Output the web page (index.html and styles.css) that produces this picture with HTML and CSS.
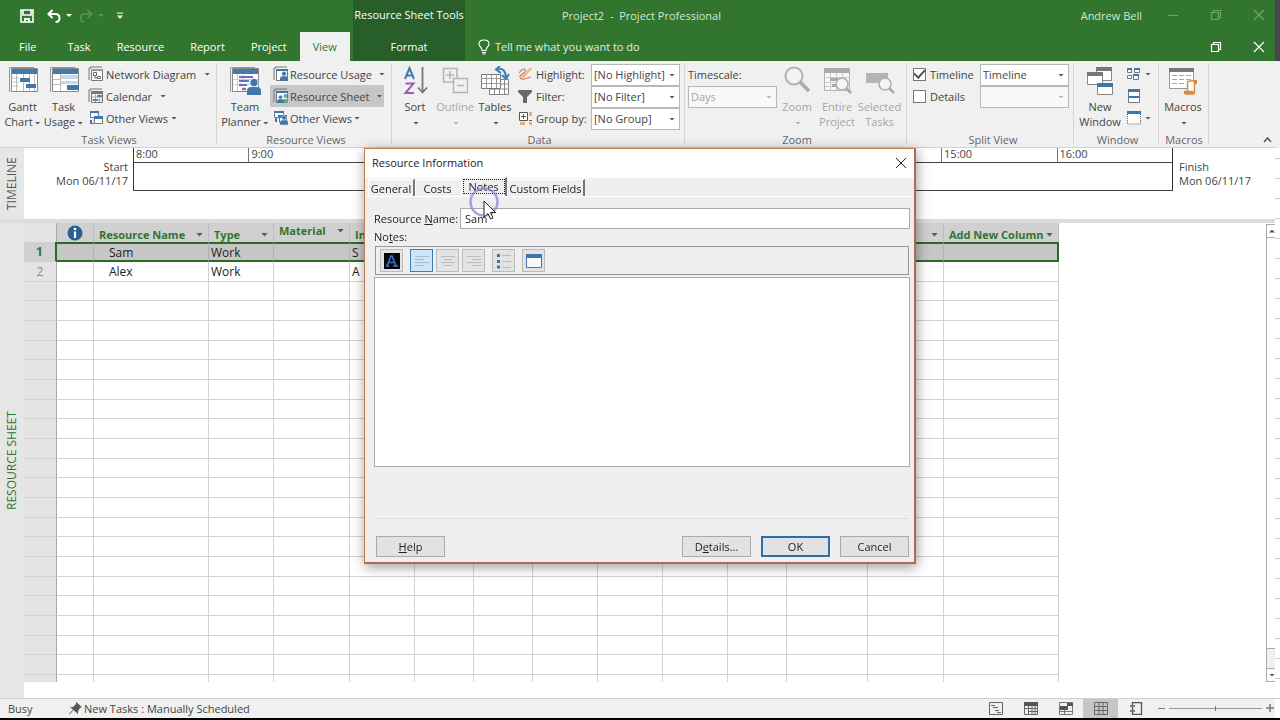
FILE: index.html
```html
<!DOCTYPE html>
<html lang="en">
<head>
<meta charset="utf-8">
<title>Project2 - Project Professional</title>
<link rel="stylesheet" href="styles.css">
</head>
<body>
<svg class="defs" width="0" height="0" aria-hidden="true">
  <symbol id="win" viewBox="0 0 16 16"><path d="M3 2H1v12M2 1h12" fill="none" stroke="#777"/><path d="M3.500 3.500h11v11h-11z" fill="#fff" stroke="#777"/></symbol>
  <symbol id="person" viewBox="0 0 10 12"><circle cx="5" cy="3.200" r="2.900" fill="#3f76ab" stroke="#f0f0f0" stroke-width=".6"/><path d="M0 12V9q0-2.600 3-2.600h4q3 0 3 2.600v3z" fill="#3f76ab"/></symbol>
  <symbol id="restore" viewBox="0 0 12 12"><path d="M1.500 3.500h7v7h-7zM3.500 3V1.500h7v7H9" fill="none" stroke="currentColor" stroke-width="1.200"/></symbol>
  <symbol id="cross" viewBox="0 0 12 12"><path d="M1 1l10 10M11 1L1 11" fill="none" stroke="currentColor" stroke-width="1.200"/></symbol>
</svg>
<div class="app">
<div class="main">
  <header class="head">
    <div class="head-left">
      <div class="qat">
        <button class="plain" aria-label="Save"><svg width="14" height="14" viewBox="0 0 14 14"><path d="M1 1h12v12H1zM3 1v5h8V1" fill="none" stroke="#fff" stroke-width="1.600"/><path d="M4 9h6v4H8v-2H6v2H4z" fill="#fff"/></svg></button>
        <button class="plain undo" aria-label="Undo"><svg width="14" height="14" viewBox="0 0 14 14"><path d="M5.500 1L1.500 5l4 4M2 5h6q4.500 0 4.500 4t-4 4" fill="none" stroke="#fff" stroke-width="2"/></svg><i class="arr white"></i></button>
        <button class="plain redo" aria-label="Redo"><svg width="14" height="14" viewBox="0 0 14 14"><path d="M8.500 1l4 4-4 4M12 5H6Q1.500 5 1.500 9t4 4" fill="none" stroke="#5c945b" stroke-width="1.600"/></svg><i class="arr faint"></i></button>
        <button class="plain" aria-label="Customize toolbar"><svg width="6" height="8" viewBox="0 0 6 8"><path d="M0 1h6" stroke="#fff"/><path d="M0 3.500h6L3 7z" fill="#fff"/></svg></button>
      </div>
      <nav class="tabs">
        <button class="tab file">File</button><button class="tab">Task</button><button class="tab">Resource</button><button class="tab">Report</button><button class="tab">Project</button><button class="tab on">View</button>
      </nav>
    </div>
    <div class="context"><div class="context-title">Resource Sheet Tools</div><button class="tab">Format</button></div>
    <div class="head-right">
      <div class="title-row"><span class="doc">Project2 &nbsp;-&nbsp; Project Professional</span><span class="user">Andrew Bell</span>
        <span class="wbtns dim"><button class="plain" aria-label="Minimize"><svg width="12" height="12"><path d="M1 6.500h10" stroke="currentColor"/></svg></button><button class="plain" aria-label="Restore"><svg width="12" height="12"><use href="#restore"/></svg></button><button class="plain" aria-label="Close"><svg width="12" height="12"><use href="#cross"/></svg></button></span></div>
      <div class="tell-row"><svg width="12" height="16" viewBox="0 0 12 16"><path d="M4 11.500q0-2-1.500-3.500Q1 6.500 1 5q0-4 5-4t5 4q0 1.500-1.500 3T8 11.500zM4 13.500h4M4.500 15h3" fill="none" stroke="#fff" stroke-width="1.100"/></svg><span>Tell me what you want to do</span>
        <span class="wbtns"><button class="plain" aria-label="Restore document"><svg width="12" height="12"><use href="#restore"/></svg></button><button class="plain" aria-label="Close document"><svg width="12" height="12"><use href="#cross"/></svg></button></span></div>
    </div>
  </header>

  <section class="ribbon">
    <div class="group g-task">
      <div class="gbody">
        <button class="big"><svg width="30" height="28" viewBox="0 0 30 28"><path d="M1.500 26V1.500H26" fill="none" stroke="#999"/><path d="M3.500 2.500h26v23h-26z" fill="#fff" stroke="#888"/><path d="M4 3h25v5H4z" fill="#4379ad"/><path d="M3 12h8M3 16h8M3 20h8M8.500 8v17M15.500 8v17M21.500 8v17M26.500 8v17" stroke="#bbb"/><path d="M12 12h10v4H12zM18 18h10v4H18z" fill="#3f76ab"/></svg><span>Gantt<br>Chart<i class="arr"></i></span></button>
        <button class="big"><svg width="30" height="28" viewBox="0 0 30 28"><path d="M1.500 26V1.500H26" fill="none" stroke="#999"/><path d="M3.500 2.500h26v23h-26z" fill="#fff" stroke="#888"/><path d="M4 3h25v5H4z" fill="#4379ad"/><path d="M12 9h17v4H12zM12 15h17v3H12z" fill="#c3d8ea"/><path d="M4 13.500h8M4 18.500h8M11.500 8v17" stroke="#bbb"/><path d="M18 19h12v5H18z" fill="#3f76ab"/></svg><span>Task<br>Usage<i class="arr"></i></span></button>
        <div class="list">
          <button class="row"><svg width="16" height="16"><use href="#win"/><path d="M3 3h12v2H3z" fill="#999"/><path d="M5.500 6.500h3v3h-3zM9.500 10.500h3v2h-3zM7 9.500V12h2" fill="none" stroke="#666"/></svg>Network Diagram<i class="arr far"></i></button>
          <button class="row"><svg width="16" height="16"><use href="#win"/><path d="M3 3h12v3H3z" fill="#777"/><path d="M4 9h10M4 12h10M7.500 6v8M11.500 6v8" stroke="#aaa"/><path d="M9 7h5v2H9zM5 11h5v2H5z" fill="#4d8abf"/></svg>Calendar<i class="arr far"></i></button>
          <button class="row"><svg width="16" height="16" viewBox="0 0 16 16"><path d="M2.500 1.500h8v6h-8z" fill="#fff" stroke="#777"/><path d="M2 1h9v2H2z" fill="#3f76ab"/><path d="M6.500 7.500h8v6h-8z" fill="#fff" stroke="#777"/><path d="M6 6h9v3H6zM2 10h2v3h2v1H2z" fill="#3f76ab"/></svg>Other Views<i class="arr"></i></button>
        </div>
      </div><div class="glabel">Task Views</div>
    </div>
    <div class="group g-res">
      <div class="gbody">
        <button class="big wide"><svg width="32" height="30" viewBox="0 0 32 30"><path d="M1.500 26V1.500H26" fill="none" stroke="#999"/><path d="M3.500 2.500h26v23h-26z" fill="#fff" stroke="#888"/><path d="M4 3h25v5H4z" fill="#4379ad"/><path d="M8.500 8v17M4 13.500h25M4 18.500h25" stroke="#ccc"/><path d="M10 11h4M16 11h8M10 15h10M12 19h6" stroke="#5578c0" stroke-width="2"/><path d="M12 11h4M13 23h4M10 19h3" stroke="#9b5db5" stroke-width="2.500"/><svg x="18" y="12" width="14" height="17"><use href="#person"/></svg></svg><span>Team<br>Planner<i class="arr"></i></span></button>
        <div class="list">
          <button class="row"><svg width="16" height="16"><use href="#win"/><path d="M3 3h12v2H3z" fill="#3f76ab"/><svg x="7" y="5" width="8" height="10"><use href="#person"/></svg></svg>Resource Usage<i class="arr far"></i></button>
          <button class="row sel"><svg width="16" height="16"><use href="#win"/><path d="M3 3h12v2H3z" fill="#3f76ab"/><circle cx="12.500" cy="8" r="2" fill="#69a88a"/><path d="M10 11h5v4h-5z" fill="#69a88a"/><svg x="4" y="7" width="7" height="8"><use href="#person"/></svg></svg>Resource Sheet<i class="arr far"></i></button>
          <button class="row"><svg width="16" height="16" viewBox="0 0 16 16"><path d="M1.500 1.500h9v6h-9zM6.500 6.500h7v6h-7z" fill="#fff" stroke="#777"/><path d="M1 1h10v2H1zM5 5h9v2H5zM2 8h2v4H2z" fill="#3f76ab"/><svg x="7" y="5" width="8" height="10"><use href="#person"/></svg></svg>Other Views<i class="arr"></i></button>
        </div>
      </div><div class="glabel">Resource Views</div>
    </div>
    <div class="group g-data">
      <div class="gbody">
        <button class="big b40"><svg width="26" height="30" viewBox="0 0 26 30"><path d="M3 13L7.500 2 12 13M4.500 9.500h6" fill="none" stroke="#3f7cb5" stroke-width="2"/><path d="M3.500 17.500h8L3.500 27h8.500" fill="none" stroke="#9b5db5" stroke-width="2"/><path d="M20.500 1v25M16 21.500l4.500 5 4.500-5" fill="none" stroke="#777" stroke-width="1.800"/></svg><span>Sort<br><i class="arr"></i></span></button>
        <button class="big b40 off"><svg width="26" height="30" viewBox="0 0 26 30"><path d="M12.500 16H1.500V2.500H15V12.500M11.500 12.500h14v14h-14zM8 5v8M4 9h8M15 19.500h7" fill="none" stroke="#b4b4b4" stroke-width="1.500"/></svg><span>Outline<br><i class="arr"></i></span></button>
        <button class="big b40"><svg width="30" height="30" viewBox="0 0 30 30"><path d="M9.500 13.500h19v15h-19zM9 18h20M9 23h20M14.500 13v15M19.500 13v15M24.500 13v15" fill="#fff" stroke="#888"/><path d="M1.500 8.500h19v14h-19z" fill="#fff" stroke="#777"/><path d="M1 12.500h20M1 17.500h20M6.500 8v14M11.500 8v14M16.500 8v14" stroke="#999"/><path d="M17 3q8-2 9 8M20 0l-4 3.500 5 3.500M22 9l4 4 3-5" fill="none" stroke="#3f7cb5" stroke-width="2"/></svg><span>Tables<br><i class="arr"></i></span></button>
        <div class="fields">
          <label for="hl"><svg width="15" height="16" viewBox="0 0 15 16"><path d="M1 7q4-5 6-3.500T2 10q0 4 4 3t7-2" fill="none" stroke="#e07a70" stroke-width="1.200"/><path d="M4 12L13 2" stroke="#e9bd70" stroke-width="2.500"/></svg>Highlight:</label><span class="combo"><select id="hl"><option>[No Highlight]</option></select></span>
          <label for="fl"><svg width="15" height="16" viewBox="0 0 15 16"><path d="M0 2h14v2L9 9v6H5V9L0 4z" fill="#6a6a6a"/></svg>Filter:</label><span class="combo"><select id="fl"><option>[No Filter]</option></select></span>
          <label for="gb"><svg width="15" height="16" viewBox="0 0 15 16"><path d="M1.500 2.500h8v8h-8z" fill="#fff" stroke="#555"/><path d="M5.500 4v5M3 6.500h5M11 10.500h3" stroke="#555"/><path d="M11 2h3v4h-3zM2 12h5v3H2zM11 12h3v3h-3z" fill="#e0b36c"/></svg>Group by:</label><span class="combo"><select id="gb"><option>[No Group]</option></select></span>
        </div>
      </div><div class="glabel">Data</div>
    </div>
    <div class="group g-zoom">
      <div class="gbody">
        <div class="scale"><label for="ts">Timescale:</label><span class="combo off"><select id="ts" disabled><option>Days</option></select></span></div>
        <button class="big b40 off"><svg width="28" height="28" viewBox="0 0 28 28"><circle cx="11" cy="10" r="8.500" fill="#f6f2f6" stroke="#b4b0b4" stroke-width="2"/><path d="M17 16l9 9" stroke="#aaa" stroke-width="3.500"/></svg><span>Zoom<br><i class="arr"></i></span></button>
        <button class="big b40 off"><svg width="30" height="28" viewBox="0 0 30 28"><path d="M2.500 2.500h25v22h-25z" fill="#f6f6f6" stroke="#b4b4b4"/><path d="M2 2h26v5H2z" fill="#aaa"/><path d="M3 11.500h24M3 16.500h24M3 20.500h24M8.500 7v17M14.500 7v17M20.500 7v17" stroke="#ccc"/><path d="M8 12h8v3H8zM10 18h6v3h-6z" fill="#aaa"/><circle cx="20" cy="18" r="6" fill="#f4f4f4" stroke="#b0b0b0" stroke-width="1.600"/><path d="M24 22l5 5" stroke="#aaa" stroke-width="2.500"/></svg><span>Entire<br>Project</span></button>
        <button class="big b44 off"><svg width="30" height="28" viewBox="0 0 30 28"><path d="M1 7h22v10H1z" fill="#b4b4b4"/><circle cx="20" cy="18" r="6" fill="#f4f4f4" stroke="#b0b0b0" stroke-width="1.600"/><path d="M24 22l5 5" stroke="#aaa" stroke-width="2.500"/></svg><span>Selected<br>Tasks</span></button>
      </div><div class="glabel">Zoom</div>
    </div>
    <div class="group g-split">
      <div class="gbody"><div class="checks">
        <label><input type="checkbox" checked>Timeline</label><span class="combo"><select aria-label="Timeline view"><option>Timeline</option></select></span>
        <label><input type="checkbox">Details</label><span class="combo off"><select aria-label="Details view" disabled><option></option></select></span>
      </div></div><div class="glabel">Split View</div>
    </div>
    <div class="group g-win">
      <div class="gbody">
        <button class="big b46"><svg width="28" height="30" viewBox="0 0 28 30"><path d="M10.500 2.500h15v12h-15z" fill="#fff" stroke="#888"/><path d="M10 1h16v4H10z" fill="#777"/><path d="M1.500 6.500h15v12h-15z" fill="#fff" stroke="#888"/><path d="M1 6h16v4H1z" fill="#777"/><path d="M11.500 17.500h15v11h-15z" fill="#fff" stroke="#888"/><path d="M11 17h16v4H11z" fill="#3f76ab"/></svg><span>New<br>Window</span></button>
        <div class="list">
          <button class="row" aria-label="Switch windows"><svg width="16" height="16" viewBox="0 0 16 16"><path d="M1.500 3.500h4v3h-4zM8.500 3.500h5v3h-5zM1.500 9.500h4v3h-4zM7.500 8.500h5v5h-5z" fill="#fff" stroke="#777"/><path d="M1 2h5v2H1zM8 2h6v2H8zM7 8h6v2H7z" fill="#3f76ab"/></svg><i class="arr"></i></button>
          <button class="row" aria-label="Arrange all"><svg width="16" height="16" viewBox="0 0 16 16"><path d="M2.500 1.500h11v13h-11z" fill="#fff" stroke="#777"/><path d="M2 1h12v3H2zM2 8h12v2H2z" fill="#3f76ab"/></svg></button>
          <button class="row" aria-label="Hide"><svg width="16" height="16" viewBox="0 0 16 16"><path d="M1.500 4v10h13V4" fill="#fff" stroke="#666" stroke-dasharray="1 1"/><path d="M1 1h14v3H1z" fill="#3f76ab"/></svg><i class="arr"></i></button>
        </div>
      </div><div class="glabel">Window</div>
    </div>
    <div class="group g-mac">
      <div class="gbody">
        <button class="big b46"><svg width="30" height="30" viewBox="0 0 30 30"><path d="M1.500 2.500h24v20h-24z" fill="#fff" stroke="#999"/><path d="M1 2h25v4H1z" fill="#777"/><path d="M4 9.500h5M11 9.500h5M18 9.500h5M4 13.500h5M11 13.500h5M18 13.500h5M4 17.500h5M11 17.500h5" stroke="#aaa"/><path d="M19.500 25V17q0-2 2-2h7q-2 0-2 2v9q0 2-2 2h-6q-2 0-2-2.500h8q0 2.500 1.500 2.500" fill="#fff" stroke="#dc8a3c" stroke-width="1.500"/><path d="M16 25h8v3h-6zM26 14h3v4h-3z" fill="#dc8a3c"/></svg><span>Macros<br><i class="arr"></i></span></button>
      </div><div class="glabel">Macros</div>
    </div>
    <button class="plain collapse" aria-label="Collapse the ribbon"><svg width="9" height="6" viewBox="0 0 9 6"><path d="M1 5l3.500-4L8 5" fill="none" stroke="#555" stroke-width="1.500"/></svg></button>
  </section>

  <section class="timeline">
    <div class="side">TIMELINE</div>
    <div class="tl-start">Start<br>Mon 06/11/17</div>
    <div class="tl-bar">
      <div class="ticks"><span>8:00</span><span>9:00</span><span></span><span></span><span></span><span></span><span></span><span>15:00</span><span>16:00</span></div>
      <div class="span"></div>
    </div>
    <div class="tl-end">Finish<br>Mon 06/11/17</div>
  </section>

  <section class="sheet">
    <div class="side green">RESOURCE SHEET</div>
    <div class="grid-wrap">
      <table class="grid">
        <colgroup><col class="c33"><col class="c37"><col class="c115"><col class="c65"><col class="c76"><col class="c65"><col class="c59"><col class="c59"><col class="c65"><col class="c65"><col class="c65"><col class="c59"><col class="c81"><col class="c76"><col class="c115"></colgroup>
        <thead><tr><th class="num"></th><th class="info"><svg width="16" height="16" viewBox="0 0 16 16"><circle cx="8" cy="8" r="7.500" fill="#2c5f94"/><circle cx="8" cy="4" r="1.300" fill="#fff"/><path d="M8 6.500V13" stroke="#fff" stroke-width="2.200"/></svg></th><th><div>Resource Name<i class="arr"></i></div></th><th><div>Type<i class="arr"></i></div></th><th class="up"><div>Material<i class="arr"></i></div></th><th><div>In</div></th><th></th><th></th><th></th><th></th><th></th><th></th><th></th><th><div><i class="arr"></i></div></th><th><div>Add New Column<i class="arr"></i></div></th></tr></thead>
        <tbody>
          <tr class="picked"><td class="num">1</td><td></td><td class="name">Sam</td><td>Work</td><td></td><td>S</td><td></td><td></td><td></td><td></td><td></td><td></td><td></td><td></td><td></td></tr>
          <tr><td class="num">2</td><td></td><td class="name">Alex</td><td>Work</td><td></td><td>A</td><td></td><td></td><td></td><td></td><td></td><td></td><td></td><td></td><td></td></tr>
        </tbody>
      </table>
    </div>
    <div class="vscroll"><button class="plain" aria-label="Scroll up"><i class="arr flip"></i></button><div class="thumb"></div><div class="track"></div><button class="plain" aria-label="Scroll down"><i class="arr"></i></button></div>
  </section>

  <footer class="status">
    <span class="busy">Busy</span>
    <svg width="13" height="13" viewBox="0 0 13 13"><path d="M7 0l6 5-2 1-2 3v3L1 5h3l3-3z" fill="#555"/><path d="M5 7l-5 5.500" stroke="#555"/></svg>
    <span>New Tasks : Manually Scheduled</span>
    <div class="views">
      <button class="plain" aria-label="Gantt chart"><svg width="14" height="13" viewBox="0 0 14 13"><path d="M.5.500h13v12H.5zM2 3.500h4M4 5.500h5M6 8.500h4M8 10.500h4" fill="none" stroke="#666"/></svg></button>
      <button class="plain" aria-label="Task usage"><svg width="14" height="13" viewBox="0 0 14 13"><path d="M.5.500h13v12H.5zM0 6.500h14M4.500 9.500H14M4.500 4v8M8 4v8M11 4v8" fill="none" stroke="#666"/><path d="M0 0h14v4H0z" fill="#555"/></svg></button>
      <button class="plain" aria-label="Team planner"><svg width="14" height="13" viewBox="0 0 14 13"><path d="M.5.500h13v12H.5zM0 9.500h14M5.500 8v4" fill="none" stroke="#777"/><path d="M8 1h6v3H8zM1 4h8v4H1z" fill="#555"/></svg></button>
      <button class="plain on" aria-label="Resource sheet"><svg width="14" height="13" viewBox="0 0 14 13"><path d="M.5.500h13v12H.5zM0 4.500h14M0 8.500h14M5 0v13M9 0v13" fill="none" stroke="#666"/></svg></button>
      <button class="plain" aria-label="Report"><svg width="14" height="13" viewBox="0 0 14 13"><path d="M3.500 3V.5h9v12h-9V10M3.500 5v3M1 4h5M1 9h5" fill="none" stroke="#555" stroke-width="1.300"/></svg></button>
    </div>
    <div class="zoom"><button class="plain" aria-label="Zoom out"><svg width="7" height="8"><path d="M0 4.500h7" stroke="#777"/></svg></button><input type="range" aria-label="Zoom level"><button class="plain" aria-label="Zoom in"><svg width="8" height="8"><path d="M0 4h8M4 0v8" stroke="#777" stroke-width="1.500"/></svg></button></div>
  </footer>
</div>
<div class="edge" aria-hidden="true"></div>
</div>

<div class="overlay">
  <form class="dialog" role="dialog" aria-labelledby="dt">
    <div class="dtitle"><span id="dt">Resource Information</span><button type="button" class="plain" aria-label="Close dialog"><svg width="12" height="12" viewBox="0 0 12 12"><path d="M1 1l10 10M11 1L1 11" stroke="#222"/></svg></button></div>
    <div class="dtabs"><button type="button">General</button><button type="button" class="costs">Costs</button><button type="button" class="on">Notes</button><button type="button" class="custom">Custom Fields</button></div>
    <div class="dbody">
      <div class="frow"><label for="rn">Resource <u>N</u>ame:</label><input id="rn" type="text" value="Sam"></div>
      <label class="nlabel" for="nt">No<u>t</u>es:</label>
      <div class="tools">
        <button type="button" aria-label="Font"><svg width="16" height="16" viewBox="0 0 16 16"><path d="M0 0h16v16H0z" fill="#05070d"/><path d="M2 13h3M3 13L7 3h1l4 10h2M9 13h5M5.500 9.500h5" fill="none" stroke="#3a72cc" stroke-width="1.600"/></svg></button>
        <button type="button" class="on gap" aria-label="Align left"><svg width="14" height="12"><path d="M0 1.500h14M0 4.500h9M0 7.500h14M0 10.500h9" stroke="#a9bccb"/></svg></button>
        <button type="button" aria-label="Center"><svg width="14" height="12"><path d="M0 1.500h14M3 4.500h8M0 7.500h14M3 10.500h8" stroke="#bbb"/></svg></button>
        <button type="button" aria-label="Align right"><svg width="14" height="12"><path d="M0 1.500h14M5 4.500h9M0 7.500h14M5 10.500h9" stroke="#bbb"/></svg></button>
        <button type="button" class="gap" aria-label="Bulleted list"><svg width="16" height="16"><path d="M1 2.500h3M1 8.500h3M1 14h3" stroke="#3f76ab" stroke-width="3"/><path d="M6 2.500h9M6 8.500h9M6 14.500h9" stroke="#bbb"/></svg></button>
        <button type="button" class="gap" aria-label="Insert object"><svg width="16" height="14"><path d="M.5.500h15v13H.5z" fill="#f6fafd" stroke="#3f76ab"/><path d="M0 0h16v4H0z" fill="#3f76ab"/></svg></button>
      </div>
      <textarea id="nt"></textarea>
      <div class="dfoot"><button type="button"><u>H</u>elp</button><button type="button" class="push">D<u>e</u>tails...</button><button type="button" class="ok">OK</button><button type="button">Cancel</button></div>
    </div>
    <svg class="pointer" width="32" height="34" viewBox="0 0 32 34"><circle cx="15" cy="15" r="13.500" fill="none" stroke="#8c86d8" stroke-opacity=".75" stroke-width="2.500"/><path d="M15 14v16l4-3.500 2.500 5.500 2.500-1-2.500-5.500h5z" fill="#fff" stroke="#222"/></svg>
  </form>
</div>
<script src="rows.js"></script>
</body>
</html>
```
FILE: rows.js
```js
// Fill the sheet with blank rows below the resources.
const body = document.querySelector(".grid tbody");
const columns = document.querySelectorAll(".grid col").length;
for (let r = 0; r < 21; r++) {
  const row = body.insertRow();
  for (let c = 0; c < columns; c++) row.insertCell();
  row.cells[0].className = "num";
}
```
FILE: styles.css
```css
* { box-sizing: border-box; }
body { margin: 0; font: 11px/15px "Open Sans", "Noto Sans", sans-serif; color: #444; background: #fff; overflow: hidden; }
button, select, input, textarea { font: inherit; color: inherit; margin: 0; }
button { border: 0; padding: 0; background: none; white-space: nowrap; }
svg { display: block; flex: none; }
.defs { position: absolute; }
.plain { display: flex; align-items: center; justify-content: center; }
.arr { display: inline-block; flex: none; width: 6px; height: 3px; background: #555; clip-path: polygon(0 0, 100% 0, 50% 100%); vertical-align: middle; margin-left: 2px; }
.arr.white { background: #fff; }
.arr.faint { background: #5c945b; }
.arr.flip { clip-path: polygon(50% 0, 100% 100%, 0 100%); }

.app { display: flex; height: 100vh; border-bottom: 2px solid #000; }
.main { flex: 1; min-width: 0; display: flex; flex-direction: column; }
.edge { width: 5px; background: linear-gradient(#4b4550 61px, #f0f0f0 61px, #f0f0f0 148px, transparent 148px), repeating-linear-gradient(#fff 0 18px, #ccc 18px 19px, #fff 19px 20px); }

.head { display: flex; height: 61px; background: #31752f; color: #fff; }
.head-left { width: 353px; }
.qat { display: flex; align-items: center; height: 31px; padding-left: 20px; gap: 13px; }
.qat .undo, .qat .redo { gap: 3px; }
.qat .redo { margin: 0 0 0 -6px; }
.tabs { display: flex; height: 29px; margin-top: 1px; }
.tab { height: 29px; padding: 0 13px; }
.tab.file { padding: 0 18px 0 19px; }
.tab.on { background: #f0f0f0; color: #31752f; }
.context { width: 112px; background: #275e29; text-align: center; }
.context-title { height: 32px; line-height: 30px; white-space: nowrap; }
.head-right { flex: 1; }
.title-row, .tell-row { display: flex; align-items: center; }
.title-row { height: 32px; padding: 0 10px 2px 97px; color: #d5e6d4; }
.user { margin-left: auto; margin-right: 25px; }
.tell-row { height: 29px; padding: 0 10px 0 13px; gap: 5px; color: #e2eee1; }
.tell-row .wbtns { margin-left: auto; color: #fff; }
.wbtns { display: flex; gap: 31px; }
.wbtns.dim { color: #6fa36e; }

.ribbon { display: flex; height: 87px; padding-top: 2px; background: #f0f0f0; border-bottom: 1px solid #d0d0d0; }
.group { display: flex; flex-direction: column; border-right: 1px solid #d6d6d6; margin-bottom: 3px; flex: none; }
.gbody { display: flex; flex: none; height: 67px; }
.glabel { flex: none; text-align: center; line-height: 20px; color: #666; }
.g-task { width: 217px; padding-left: 2px; }
.g-res { width: 175px; padding-left: 4px; }
.g-data { width: 293px; padding-left: 3px; }
.g-zoom { width: 222px; padding-left: 3px; }
.g-split { width: 167px; padding-left: 6px; }
.g-win { width: 85px; padding-left: 3px; }
.g-mac { width: 50px; padding-left: 1px; }
.big { display: flex; flex-direction: column; align-items: center; width: 41px; padding-top: 3px; line-height: 15px; }
.big svg { margin-bottom: auto; }
.big span { height: 31px; }
.wide { width: 48px; }
.b40 { width: 40px; }
.b44 { width: 45px; }
.b46 { width: 46px; }
.off { color: #a6a6a6; }
.off .arr { background: #b0b0b0; }
.list { display: grid; grid-template-rows: repeat(3, 22px); margin-left: 3px; justify-items: start; }
.g-res .list { margin-left: 1px; }
.g-win .list { margin-left: 2px; }
.row { display: flex; align-items: center; gap: 2px; padding: 0 2px 0 1px; height: 22px; }
.g-res .row { padding-left: 3px; gap: 1px; }
.row .arr { margin-left: 1px; }
.row .far { margin-left: 6px; }
.row.sel { background: #c6c6c6; }
.fields, .checks { display: grid; grid-auto-rows: 22px; align-items: center; padding-top: 1px; }
.fields { grid-template-columns: 73px 89px; margin-left: 3px; }
.fields label { display: flex; align-items: center; gap: 3px; white-space: nowrap; height: 20px; margin-bottom: 2px; }
.checks { grid-template-columns: 67px 89px; align-content: start; }
.checks label { display: flex; align-items: center; gap: 4px; height: 20px; margin-bottom: 2px; }
.checks input { appearance: none; margin: 0; width: 13px; height: 13px; border: 1px solid #777; background: #fff; display: grid; place-items: center; }
.checks input:checked::before { content: ""; width: 9px; height: 5px; border: solid #555; border-width: 0 0 2px 2px; transform: rotate(-48deg); margin-bottom: 3px; }
.scale { width: 89px; line-height: 22px; padding-top: 1px; }
.scale label { display: block; height: 22px; }
.combo { display: grid; grid-template-columns: 1fr 10px; align-items: center; height: 22px; border: 1px solid #b8b8b8; background: #fff; }
.combo select { grid-area: 1 / 1 / 2 / 3; appearance: none; border: 0; padding: 0 0 0 2px; height: 18px; line-height: 18px; background: none; color: #444; opacity: 1; }
.combo.off { background: #f8f8f8; }
.combo.off select { color: #a6a6a6; }
.combo::after { content: ""; grid-area: 1 / 2; width: 6px; height: 3px; background: #555; clip-path: polygon(0 0, 100% 0, 50% 100%); }
.combo.off::after { background: #b8b8b8; }
.collapse { margin: auto 3px 4px auto; }

.side { width: 24px; flex: none; background: #e6e6e6; writing-mode: vertical-rl; transform: rotate(180deg); text-align: center; line-height: 24px; font-size: 12px; color: #555; }
.side.green { color: #31752f; }
.timeline { display: flex; height: 71px; }
.tl-start { width: 109px; padding: 12px 5px 0 0; text-align: right; line-height: 14px; }
.tl-end { width: 102px; padding: 12px 0 0 6px; line-height: 14px; }
.tl-bar { flex: 1; border-left: 1px solid #333; border-right: 1px solid #333; height: 43px; }
.ticks { display: flex; height: 14px; line-height: 11px; }
.ticks span { flex: 1; height: 14px; padding-left: 2px; border-left: 1px solid #777; }
.ticks span:first-child { border-left: 0; }
.span { height: 29px; border: solid #444; border-width: 1px 0; }

.sheet { flex: 1; min-height: 0; display: flex; border-top: 4px solid #dcdcdc; }
.grid-wrap { flex: 1; overflow: hidden; margin-bottom: 16px; }
.grid { width: 1035px; table-layout: fixed; border-spacing: 0; font-size: 12px; color: #222; }
.c33 { width: 33px; } .c37 { width: 37px; } .c115 { width: 115px; } .c65 { width: 65px; } .c76 { width: 76px; } .c59 { width: 59px; } .c81 { width: 81px; }
.grid th { height: 19px; padding: 4px 0 0 5px; background: #d0d0d0; border-right: 1px solid #bcbcbc; text-align: left; line-height: 15px; font-size: 11px; color: #31752f; white-space: nowrap; }
.grid th div { display: flex; align-items: center; justify-content: space-between; padding-right: 5px; }
.grid th .arr { width: 7px; height: 4px; background: #31752f; margin-left: auto; }
.grid th.up { padding: 0 0 4px 5px; }
.grid th.info { padding: 0 0 0 10px; }
.grid td { height: 20px; padding: 0 0 0 2px; border: solid #d2d2d2; border-width: 0 1px 1px 0; line-height: 15px; }
.grid tr:nth-child(3n) td { height: 19px; }
.grid .name { padding-left: 15px; }
.grid .num { background: #e4e4e4; color: #888; text-align: center; border-right-color: #aaa; padding: 0; }
.grid .picked td { background: #c6c6c6; border-color: #b0b0b0; border-bottom: 2px solid #2a6b2a; border-top: 2px solid #2a6b2a; line-height: 15px; }
.grid .picked .num { background: #d0d0d0; color: #31752f; font-weight: bold; border-color: #ccc; border-width: 0 2px 1px 0; border-right-color: #2a6b2a; }
.grid .picked td:last-child { border-right: 2px solid #2a6b2a; }
.vscroll { width: 9px; margin: 1px 0 16px; display: flex; flex-direction: column; border-left: 1px solid #aaa; overflow: hidden; }
.vscroll button { height: 14px; border: solid #aaa; border-width: 1px 0; }
.vscroll .thumb { flex: 1; border-bottom: 1px solid #aaa; }
.vscroll .track { height: 19px; background: #f0f0f0; }

.status { display: flex; align-items: center; height: 20px; padding: 0 0 1px 8px; background: #f0f0f0; border-top: 1px solid #d0d0d0; }
.busy { width: 61px; }
.status > svg { margin-right: 2px; }
.views { display: flex; height: 100%; margin-left: auto; }
.views button { width: 35px; height: 19px; padding: 0 0 1px; }
.views button.on { background: #c6c6c6; }
.zoom { display: flex; align-items: center; gap: 4px; padding: 0 1px 0 5px; }
.zoom input { appearance: none; width: 93px; height: 7px; margin: 0; background: linear-gradient(transparent 3px, #999 3px, #999 4px, transparent 4px); }
.zoom input::-webkit-slider-thumb { appearance: none; width: 1px; height: 5px; background: #777; }

.overlay { position: fixed; inset: 0; display: grid; place-items: center; padding-bottom: 8px; }
.dialog { position: relative; width: 552px; min-height: 416px; display: flex; flex-direction: column; background: #efefef; border: 1px solid #c87850; border-right: 2px solid #b06a50; border-bottom: 2px solid #b06a50; box-shadow: 1px 3px 12px rgba(0, 0, 0, .4); color: #222; }
.dtitle { display: flex; justify-content: space-between; align-items: center; height: 29px; padding: 0 7px 2px; background: #fff; }
.dtabs { display: flex; align-items: end; height: 19px; padding-left: 3px; border-bottom: 1px solid #fff; }
.dtabs button { width: 47px; height: 17px; border: solid #fff; border-width: 1px 2px 0 1px; border-right-color: #777; }
.dtabs .costs { width: 46px; border-right-color: #efefef; }
.dtabs .on { width: 46px; height: 19px; padding-bottom: 2px; outline: 1px dotted #222; outline-offset: -3px; }
.dtabs .custom { width: 78px; }
.dbody { flex: 1; display: flex; flex-direction: column; padding: 11px 4px 5px 9px; }
.frow { display: flex; align-items: center; }
.frow label { width: 86px; white-space: nowrap; }
.frow input { flex: 1; height: 21px; padding: 0 4px; border: 1px solid #aaa; background: #fff; }
.nlabel { margin: 0 0 2px; }
.tools { display: flex; align-items: center; gap: 3px; height: 29px; margin: 0 1px 2px; padding: 0 4px; border: 1px solid #999; }
.tools button { width: 23px; height: 23px; display: grid; place-items: center; background: #e3e3e3; border: 1px solid #bbb; }
.tools .gap { margin-left: 4px; }
.tools .on { background: #cbe6f8; border-color: #3f7ca8; }
textarea { height: 190px; border: 1px solid #aaa; background: #fff; resize: none; display: block; }
.dfoot { display: flex; gap: 10px; margin: auto 1px 0 2px; padding-top: 17px; border-top: 1px solid #ddd; }
.dfoot button { width: 69px; height: 21px; background: #e2e2e2; border: 1px solid #aaa; }
.dfoot .push { margin-left: auto; }
.dfoot .ok { border: 2px solid #2a6fae; }
.pointer { position: absolute; left: 104px; top: 38px; }
```
